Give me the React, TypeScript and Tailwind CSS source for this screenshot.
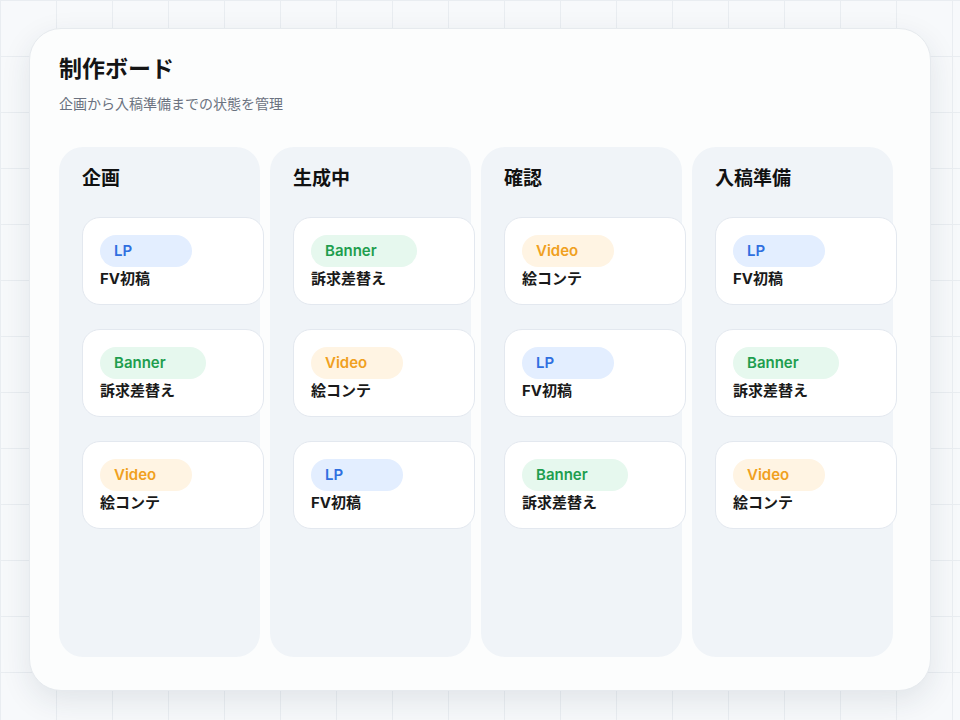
const tags = {
  LP: "bg-[#e3eeff] text-[#2f6fe0]",
  Banner: "bg-[#e6f8ee] text-[#1e9e4e]",
  Video: "bg-[#fff4e3] text-[#f0a020]",
} as const;

type Tag = keyof typeof tags;

const items: Record<Tag, string> = {
  LP: "FV初稿",
  Banner: "訴求差替え",
  Video: "絵コンテ",
};

const columns: { title: string; cards: Tag[] }[] = [
  { title: "企画", cards: ["LP", "Banner", "Video"] },
  { title: "生成中", cards: ["Banner", "Video", "LP"] },
  { title: "確認", cards: ["Video", "LP", "Banner"] },
  { title: "入稿準備", cards: ["LP", "Banner", "Video"] },
];

function Card({ tag }: { tag: Tag }) {
  return (
    <div className="w-[182px] h-[88px] rounded-[18px] bg-white border border-[#e3e8ef] pl-[17px] pt-[17px]">
      <div
        className={`h-8 inline-flex items-center px-[14px] rounded-full text-[15px] font-semibold ${tags[tag]}`}
        style={{ minWidth: tag === "Banner" ? 106 : 92 }}
      >
        {tag}
      </div>
      <div className="mt-[2px] text-[15px] font-bold text-[#1a1a1a] leading-5">{items[tag]}</div>
    </div>
  );
}

export default function App() {
  return (
    <div
      className="w-[960px] h-[720px] pt-7 pl-[29px] bg-[#f7f9fb] bg-[linear-gradient(#e9edf1_1px,transparent_1px),linear-gradient(90deg,#e9edf1_1px,transparent_1px)] bg-[size:56px_56px]"
      style={{ fontFamily: "Inter, 'Noto Sans CJK JP', sans-serif" }}
    >
      <div className="w-[902px] h-[663px] rounded-[32px] bg-[#fcfdfd] border border-[#e6eaee] shadow-[0_10px_30px_rgba(30,50,70,0.10)] pt-[24px] pl-[29px]">
        <h1 className="text-[23px] font-bold text-[#151515] leading-8">制作ボード</h1>
        <p className="mt-[9px] text-[14px] text-[#6b7280] leading-5">企画から入稿準備までの状態を管理</p>
        <div className="mt-[33px] flex gap-[10px]">
          {columns.map((c) => (
            <div key={c.title} className="w-[201px] h-[510px] rounded-[24px] bg-[#f0f4f8] pl-[23px] pt-[20px]">
              <h2 className="text-[19px] font-bold text-[#111] leading-6">{c.title}</h2>
              <div className="mt-[26px] flex flex-col gap-[24px]">
                {c.cards.map((t, i) => (
                  <Card key={i} tag={t} />
                ))}
              </div>
            </div>
          ))}
        </div>
      </div>
    </div>
  );
}
